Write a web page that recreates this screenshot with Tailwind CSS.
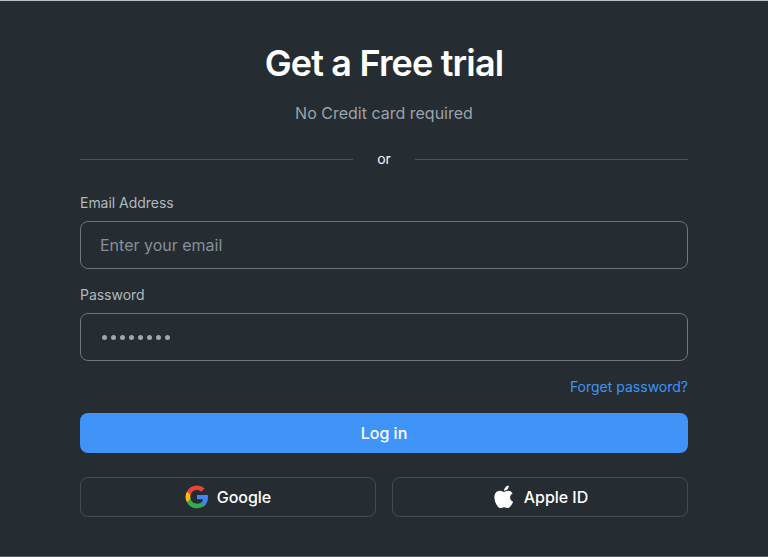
<!DOCTYPE html>
<html lang="en">
<head>
<meta charset="utf-8">
<title>Get a Free trial</title>
<script src="https://cdn.jsdelivr.net/npm/@tailwindcss/browser@4"></script>
</head>
<body class="bg-[#252c32] font-['Inter',sans-serif] antialiased">
<main class="flex h-[557px] w-[768px] flex-col border-t border-b border-t-[#b6c3ca] border-b-[#595e64] px-20 pt-[38px]">
  <h1 class="text-center text-[36px] leading-12 font-semibold tracking-[-0.84px] text-white">Get a Free trial</h1>
  <p class="mt-[14px] text-center text-base leading-6 text-[#9aa3aa]">No Credit card required</p>
  <div class="mt-[22px] flex h-6 items-center gap-6 text-sm text-[#f6f8f9]">
    <span class="h-px flex-1 bg-[#48535b]"></span>
    <span>or</span>
    <span class="h-px flex-1 bg-[#48535b]"></span>
  </div>
  <form class="flex flex-col">
    <label class="mt-5 text-sm leading-6 tracking-[-0.03px] text-[#b0babf]">Email Address</label>
    <div class="mt-[6px] flex h-12 items-center rounded-lg border border-[#6e777d] px-[19px] text-base text-[#84919a]">Enter your email</div>
    <label class="mt-[14px] text-sm leading-6 tracking-[-0.03px] text-[#b0babf]">Password</label>
    <div class="mt-[6px] flex h-12 items-center gap-1 rounded-lg border border-[#6e777d] px-[20.5px] pt-[1px]">
      <span class="size-[5px] rounded-full bg-[#9ea7ad]"></span><span class="size-[5px] rounded-full bg-[#9ea7ad]"></span><span class="size-[5px] rounded-full bg-[#9ea7ad]"></span><span class="size-[5px] rounded-full bg-[#9ea7ad]"></span><span class="size-[5px] rounded-full bg-[#9ea7ad]"></span><span class="size-[5px] rounded-full bg-[#9ea7ad]"></span><span class="size-[5px] rounded-full bg-[#9ea7ad]"></span><span class="size-[5px] rounded-full bg-[#9ea7ad]"></span>
    </div>
    <a class="mt-[14px] self-end text-sm leading-6 text-[#4094f7]">Forget password?</a>
    <button type="button" class="mt-[14px] h-10 rounded-lg bg-[#4094f7] text-base font-medium text-white">Log in</button>
    <div class="mt-6 grid grid-cols-2 gap-4 text-base font-medium text-white">
      <button type="button" class="flex h-10 items-center justify-center gap-2 rounded-lg border border-[#414c53]">
        <svg class="size-6" viewBox="0 0 24 24"><path fill="#4285f4" d="M23 12.25c0-.78-.07-1.53-.2-2.25H12v4.26h6.2a5.3 5.3 0 0 1-2.3 3.48v2.9h3.7c2.16-2 3.4-4.94 3.4-8.39z"/><path fill="#34a853" d="M12 23.3c3.1 0 5.7-1.02 7.6-2.77l-3.7-2.88c-1.03.7-2.34 1.1-3.9 1.1-2.98 0-5.5-2.02-6.41-4.73H1.8v2.97A11.3 11.3 0 0 0 12 23.3z"/><path fill="#fbbc05" d="M5.6 14.02a6.9 6.9 0 0 1 0-4.34V6.71H1.8a11.3 11.3 0 0 0 0 10.28z"/><path fill="#ea4335" d="M12 5c1.7 0 3.2.58 4.4 1.7l3.27-3.27A11 11 0 0 0 12 .5 11.3 11.3 0 0 0 1.8 6.71l3.8 2.97C6.5 6.97 9.02 5 12 5z"/></svg>
        <span class="tracking-[-0.05px]">Google</span>
      </button>
      <button type="button" class="flex h-10 items-center justify-center gap-2 rounded-lg border border-[#414c53]">
        <svg class="size-6" viewBox="0.8 0.2 23.2 23.2" fill="white"><path d="M20.7 8.4c-1.6 1-2.4 2.2-2.4 3.8 0 1.9 1.1 3.4 2.9 4.1-.5 1.5-1.3 2.9-2.3 4.3-.8 1.1-1.6 1.8-2.7 1.8-1.4 0-2-.8-3.7-.8s-2.3.8-3.7.8c-1.1 0-1.9-.8-2.8-2C4.300 18.200 3.100 15 3.100 12c0-3.500 2.200-6.200 5.300-6.200 1.700 0 2.900 1.100 4 1.100 1 0 2.600-1.200 4.500-1.200 1.500 0 2.900.9 3.800 2.700zM15.900 4.100c.7-.9 1.200-2.100 1.100-3.300-1.200.1-2.500.8-3.300 1.700-.8.8-1.300 2-1.200 3.200 1.300.1 2.600-.6 3.400-1.600z"/></svg>
        <span class="tracking-[-0.05px]">Apple ID</span>
      </button>
    </div>
  </form>
</main>
</body>
</html>
